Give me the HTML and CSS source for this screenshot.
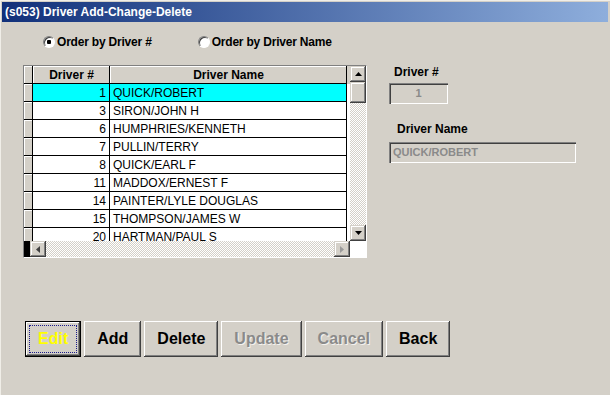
FILE: index.html
```html
<!DOCTYPE html>
<html lang="en">
<head>
    <meta charset="UTF-8">
    <meta name="viewport" content="width=device-width, initial-scale=1.0">
    <title>(s053) Driver Add-Change-Delete</title>
    <link rel="stylesheet" href="styles.css">
</head>
<body>
    <div class="window">
        <div class="titlebar">(s053) Driver Add-Change-Delete</div>
        <div class="client">
            <div class="order-row">
                <label class="radio"><span class="dot checked"></span>Order by Driver #</label>
                <label class="radio"><span class="dot"></span>Order by Driver Name</label>
            </div>

            <div class="main">
                <div class="grid">
                    <div class="viewport">
                        <div class="row head"><div class="ind"></div><div class="cell">Driver #</div><div class="cell">Driver Name</div></div>
                        <div class="row selected"><div class="ind"></div><div class="cell num">1</div><div class="cell">QUICK/ROBERT</div></div>
                        <div class="row"><div class="ind"></div><div class="cell num">3</div><div class="cell">SIRON/JOHN H</div></div>
                        <div class="row"><div class="ind"></div><div class="cell num">6</div><div class="cell">HUMPHRIES/KENNETH</div></div>
                        <div class="row"><div class="ind"></div><div class="cell num">7</div><div class="cell">PULLIN/TERRY</div></div>
                        <div class="row"><div class="ind"></div><div class="cell num">8</div><div class="cell">QUICK/EARL F</div></div>
                        <div class="row"><div class="ind"></div><div class="cell num">11</div><div class="cell">MADDOX/ERNEST F</div></div>
                        <div class="row"><div class="ind"></div><div class="cell num">14</div><div class="cell">PAINTER/LYLE DOUGLAS</div></div>
                        <div class="row"><div class="ind"></div><div class="cell num">15</div><div class="cell">THOMPSON/JAMES W</div></div>
                        <div class="row"><div class="ind"></div><div class="cell num">20</div><div class="cell">HARTMAN/PAUL S</div></div>
                    </div>
                    <div class="vscroll">
                        <div class="sbtn"><svg width="7" height="4" viewBox="0 0 7 4"><polygon points="0,4 3.5,0 7,4" fill="#000"/></svg></div>
                        <div class="sbtn thumb"></div>
                        <div class="track"></div>
                        <div class="sbtn"><svg width="7" height="4" viewBox="0 0 7 4"><polygon points="0,0 7,0 3.5,4" fill="#000"/></svg></div>
                    </div>
                    <div class="hbar">
                        <div class="stub"></div>
                        <div class="hscroll">
                            <div class="sbtn"><svg width="4" height="7" viewBox="0 0 4 7"><polygon points="4,0 4,7 0,3.5" fill="#404040"/></svg></div>
                            <div class="track"></div>
                            <div class="sbtn"><svg width="4" height="7" viewBox="0 0 4 7"><polygon points="0,0 4,3.5 0,7" fill="#9a9a9a"/></svg></div>
                        </div>
                    </div>
                    <div class="corner"></div>
                </div>

                <div class="side">
                    <div class="label first">Driver #</div>
                    <div class="field short">1</div>
                    <div class="label second">Driver Name</div>
                    <div class="field long">QUICK/ROBERT</div>
                </div>
            </div>

            <div class="buttons">
                <button class="btn focused">Edit</button>
                <button class="btn">Add</button>
                <button class="btn">Delete</button>
                <button class="btn" disabled>Update</button>
                <button class="btn" disabled>Cancel</button>
                <button class="btn">Back</button>
            </div>
        </div>
    </div>
</body>
</html>
```

FILE: styles.css
```css
body {
    margin: 0;
    background-color: #d4d0c8;
    font-family: "Liberation Sans", Arial, sans-serif;
}

.window {
    width: 610px;
    height: 395px;
    box-sizing: border-box;
    padding: 2px 2px 0 2px;
    background-color: #d4d0c8;
    box-shadow: inset 1px 1px #f0eee8;
}

.titlebar {
    height: 20px;
    line-height: 20px;
    padding-left: 3px;
    color: #fff;
    font-size: 12px;
    font-weight: bold;
    background: linear-gradient(to right, #11307a, #8eaedc);
}

.client {
    padding-left: 21px;
}

/* radio options */
.order-row {
    display: flex;
    gap: 46px;
    margin-top: 14px;
    padding-left: 20px;
    height: 12px;
}

.radio {
    display: flex;
    align-items: center;
    gap: 2px;
    font-size: 12px;
    font-weight: bold;
    line-height: 12px;
    letter-spacing: -0.2px;
}

.dot {
    width: 12px;
    height: 12px;
    box-sizing: border-box;
    border-radius: 50%;
    border: 1px solid;
    border-color: #808080 #fff #fff #808080;
    box-shadow: inset 1px 1px #404040;
    background-color: #fff;
}

.dot.checked {
    background: radial-gradient(circle, #000 0 2px, #fff 2.5px);
}

/* grid + side panel */
.main {
    display: flex;
    align-items: flex-start;
    margin-top: 17px;
}

.grid {
    width: 344px;
    height: 193px;
    box-sizing: border-box;
    border: 1px solid;
    border-color: #808080 #fff #fff #808080;
    display: grid;
    grid-template-columns: 1fr 16px;
    grid-template-rows: 1fr 16px;
    background-color: #fff;
}

.viewport {
    overflow: hidden;
}

.row {
    display: grid;
    grid-template-columns: 9px 77px 237px;
    height: 18px;
    font-size: 12px;
    line-height: 17px;
}

.row .ind,
.row .cell {
    box-sizing: border-box;
    border-right: 1px solid #000;
    border-bottom: 1px solid #000;
    white-space: nowrap;
    overflow: hidden;
}

.row .ind {
    background-color: #d4d0c8;
    box-shadow: inset 1px 1px #fff;
}

.row .cell {
    padding: 1px 2px 0 3px;
}

.row .num {
    text-align: right;
    padding-right: 3px;
}

.row.head {
    background-color: #d4d0c8;
    font-weight: bold;
}

.row.head .cell {
    text-align: center;
    box-shadow: inset 1px 1px #fff;
}

.row.selected .cell {
    background-color: #00ffff;
}

/* scrollbars */
.sbtn {
    width: 16px;
    height: 16px;
    flex: none;
    box-sizing: border-box;
    display: flex;
    align-items: center;
    justify-content: center;
    background-color: #d4d0c8;
    box-shadow: inset -1px -1px #404040, inset 1px 1px #d4d0c8, inset -2px -2px #808080, inset 2px 2px #fff;
}

.thumb {
    height: 21px;
}

.track {
    flex: 1;
    background: repeating-conic-gradient(#fff 0 25%, #d4d0c8 0 50%) 0 0 / 2px 2px;
}

.vscroll {
    display: flex;
    flex-direction: column;
}

.hbar {
    display: flex;
}

.stub {
    width: 6px;
    background-color: #000;
}

.hscroll {
    flex: 1;
    display: flex;
}

.corner {
    background-color: #fff;
}

.side {
    margin-left: 22px;
    display: flex;
    flex-direction: column;
    align-items: flex-start;
}

.label {
    font-size: 12px;
    font-weight: bold;
    line-height: 14px;
}

.label.first {
    margin-left: 5px;
}

.label.second {
    margin-top: 18px;
    margin-left: 8px;
}

.field {
    height: 21px;
    box-sizing: border-box;
    line-height: 21px;
    font-size: 11px;
    font-weight: bold;
    color: #8a8a8a;
    background-color: #d4d0c8;
    box-shadow: inset 1px 1px #808080, inset 2px 2px #404040, inset -1px -1px #fff, inset -2px -2px #d4d0c8;
}

.field.short {
    width: 59px;
    margin-top: 4px;
    text-align: center;
}

.field.long {
    width: 187px;
    margin-top: 6px;
    padding-left: 4px;
}

/* command buttons */
.buttons {
    display: flex;
    gap: 3px;
    margin-top: 63px;
    margin-left: 2px;
}

.btn {
    height: 36px;
    padding: 0 13px;
    border: none;
    font-family: "Liberation Sans", Arial, sans-serif;
    font-size: 16px;
    font-weight: bold;
    color: #000;
    background-color: #d4d0c8;
    box-shadow: inset -1px -1px #404040, inset 1px 1px #fff, inset -2px -2px #808080, inset 2px 2px #d4d0c8;
}

.btn:disabled {
    color: #8a8a8a;
    text-shadow: 1px 1px 0 #f4f2ee;
}

.btn.focused {
    color: #ffff00;
    box-shadow: inset 0 0 0 1px #000, inset -2px -2px #404040, inset 2px 2px #fff, inset -3px -3px #808080;
    outline: 1px dotted #1a1a8a;
    outline-offset: -5px;
}
```
